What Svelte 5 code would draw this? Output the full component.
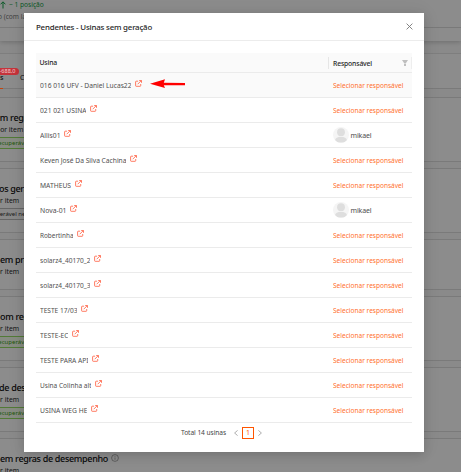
<script>
  let page = 1

  const usinas = [
    { nome: "016 016 UFV - Daniel Lucas22", largura: 91.5, destaque: true },
    { nome: "021 021 USINA", largura: 46.5 },
    { nome: "Allis01", largura: 20.5, responsavel: "mikael" },
    { nome: "Keven José Da Silva Cachina", largura: 86.5 },
    { nome: "MATHEUS", largura: 31 },
    { nome: "Nova-01", largura: 26.5, responsavel: "mikael" },
    { nome: "Robertinha", largura: 33.5 },
    { nome: "solarz4_40170_2", largura: 50.5 },
    { nome: "solarz4_40170_3", largura: 50.5 },
    { nome: "TESTE 17/03", largura: 37.5 },
    { nome: "TESTE-EC", largura: 28.5 },
    { nome: "TESTE PARA API", largura: 48.5 },
    { nome: "Usina Colinha alt", largura: 51.5 },
    { nome: "USINA WEG HE", largura: 47.5 },
  ]

  const regras = [
    { titulo: "em regras", item: "por item", tag: "recuperáveis", verde: true, recuo: -4, inicio: -5 },
    { titulo: "os geração", item: "or item", tag: "perável nesta", recuo: -4, inicio: -1 },
    { titulo: "em produção", item: "or item", baixo: true, recuo: -4, inicio: 0 },
    { titulo: "om regras", item: "or item", tag: "recuperáveis", verde: true, recuo: -4, inicio: 0 },
    { titulo: "de desempenho", item: "or item", tag: "recuperáveis", verde: true, recuo: -4, inicio: -1 },
    { titulo: "em regras de desempenho", item: "or item", info: true, recuo: -4, inicio: 0 },
  ]
</script>

<div class="page">
  <div class="summary">
    <div class="rank"><svg width="6" height="8" viewBox="0 0 6 8"><path d="M3 7.5V1M.6 3.3 3 .8l2.4 2.5" /></svg> ~ 1 posição</div>
    <div class="note">o (com lançamentos)</div>
    <div class="strip"></div>
  </div>

  <div class="tabs">
    <div class="tab active">as<span class="badge">-688,0</span></div>
    <div class="tab">Concluídas</div>
  </div>

  {#each regras as regra}
    <div class="card" class:low={regra.baixo}>
      <div class="card-title" style="margin-left: {regra.inicio}px">
        {regra.titulo}
        {#if regra.info}
          <svg width="8" height="8" viewBox="0 0 8 8"><circle cx="4" cy="4" r="3.4" /><path d="M4 3.5v2.3M4 2v.7" /></svg>
        {/if}
      </div>
      <div class="card-item" style="margin-left: {regra.recuo}px">{regra.item}</div>
      {#if regra.tag}
        <div class="tag" class:green={regra.verde}>{regra.tag}</div>
      {/if}
    </div>
  {/each}

  <div class="mask"></div>

  <div class="modal">
    <div class="modal-header">
      <span class="modal-title">Pendentes - Usinas sem geração</span>
      <svg class="close" width="7" height="7" viewBox="0 0 7 7"><path d="M.6.6l5.8 5.8M6.4.6.6 6.4" /></svg>
    </div>

    <div class="table">
      <div class="row head">
        <div class="usina">Usina</div>
        <div class="resp">
          <span>Responsável</span>
          <svg width="6" height="6" viewBox="0 0 6 6"><path d="M0 0h6L4 3H2zM2 3.5h2V6H2z" /></svg>
        </div>
      </div>

      {#each usinas as usina}
        <div class="row" class:hover={usina.destaque}>
          <div class="usina">
            <svg class="name" width={usina.largura} height="12">
              <text x="0" y="9" textLength={usina.largura} lengthAdjust="spacingAndGlyphs">{usina.nome}</text>
            </svg>
            <svg class="link" width="7" height="7" viewBox="0 0 7 7">
              <path d="M3.1 1.2H1.2a.6.6 0 0 0-.6.6v3.9c0 .4.2.6.6.6h3.9c.4 0 .6-.2.6-.6V4M2.7 4.2 6.2.7M4.2.5h2.3v2.3" />
            </svg>
            {#if usina.destaque}
              <svg class="arrow" width="36" height="10" viewBox="0 0 36 10"><path d="M0 4.8 15 .2l-1.2 3.6L35 4v2.2H13.8L15 9z" /></svg>
            {/if}
          </div>
          <div class="resp">
            {#if usina.responsavel}
              <span class="avatar">
                <svg width="16" height="16" viewBox="0 0 16 16"><circle cx="8" cy="5.2" r="3.9" /><ellipse cx="8" cy="12.7" rx="5.8" ry="2.9" /></svg>
              </span>
              <span class="person">{usina.responsavel}</span>
            {:else}
              <svg class="select" width="71" height="12">
                <text x="0" y="9" textLength="70.5" lengthAdjust="spacingAndGlyphs">Selecionar responsável</text>
              </svg>
            {/if}
          </div>
        </div>
      {/each}
    </div>

    <div class="pagination">
      <span class="total">Total 14 usinas</span>
      <svg width="4" height="6" viewBox="0 0 4 6"><path d="M3.6.4.6 3l3 2.6" /></svg>
      <span class="current">{page}</span>
      <svg width="4" height="6" viewBox="0 0 4 6"><path d="M.4.4l3 2.6-3 2.6" /></svg>
    </div>
  </div>
</div>

<style>
  .page {
    position: relative;
    width: 461px;
    height: 472px;
    overflow: hidden;
    background: #fcfcfc;
    font-family: "Noto Sans", sans-serif;
    font-size: 7px;
    color: #262626;
    white-space: nowrap;
  }

  svg {
    display: block;
    flex: none;
    fill: none;
    stroke: currentColor;
  }

  svg text {
    stroke: none;
    fill: currentColor;
  }

  .summary {
    box-sizing: border-box;
    height: 41px;
    background: #fff;
    box-shadow: 0 1px 5px rgba(0, 0, 0, 0.22);
  }

  .rank {
    display: flex;
    gap: 3px;
    align-items: center;
    height: 9px;
    font-size: 6.6px;
    color: #16a34a;
  }

  .note {
    height: 18px;
    line-height: 16px;
    margin-left: -2px;
    font-size: 6.6px;
    color: #777;
  }

  .strip {
    border-top: 1px solid #dcdcdc;
  }

  .tabs {
    display: flex;
    gap: 16px;
    box-sizing: border-box;
    height: 36px;
    margin-top: 12px;
    padding-top: 19px;
    background: #fff;
    border-top: 1px solid #e6e6e6;
    border-bottom: 1px solid #dedede;
  }

  .tab {
    position: relative;
    height: 15px;
    line-height: 10px;
    margin-left: 1px;
  }

  .tab.active {
    z-index: 1;
    width: 3px;
    margin-left: 0;
    text-indent: -4px;
    color: #1a1a1a;
    font-weight: 600;
    border-bottom: 1px solid #c4440c;
  }

  .badge {
    position: absolute;
    top: -5px;
    left: -4px;
    width: 23px;
    height: 7px;
    border-radius: 4px;
    background: #c5333b;
    color: #f0d0d2;
    font-size: 5.6px;
    font-weight: 400;
    line-height: 7px;
    text-align: center;
    text-indent: 0;
  }

  .card {
    box-sizing: border-box;
    height: 65px;
    margin-top: 6px;
    padding-top: 12px;
    background: #fff;
    border-top: 1px solid #dedede;
    border-bottom: 1px solid #dedede;
  }

  .tabs + .card {
    margin-top: 8px;
  }

  .card.low {
    height: 51px;
  }

  .card-title {
    display: flex;
    gap: 3px;
    align-items: center;
    height: 14px;
    margin-bottom: 1px;
    font-size: 9px;
    letter-spacing: -0.32px;
    font-weight: 500;
    color: #111;
  }

  .card-title svg {
    color: #888;
    stroke-width: 0.7;
  }

  .card-item {
    height: 12px;
    line-height: 10px;
    font-size: 6.8px;
  }

  .tag {
    box-sizing: border-box;
    width: 45px;
    height: 12px;
    line-height: 10px;
    text-indent: -4px;
    font-size: 6px;
    color: #333;
    background: #fafafa;
    border: 1px solid #bbb;
    border-left: 0;
  }

  .tag.green {
    color: #389e0d;
    background: #f6ffed;
    border-color: #95de64;
  }

  .mask {
    position: absolute;
    inset: 0;
    background: rgba(0, 0, 0, 0.45);
  }

  .modal {
    position: absolute;
    z-index: 2;
    top: 13px;
    left: 24px;
    width: 400px;
    height: 439px;
    background: #fff;
    box-shadow: 0 3px 9px rgba(0, 0, 0, 0.14), 0 0 18px rgba(0, 0, 0, 0.07);
  }

  .modal-header {
    display: flex;
    align-items: center;
    justify-content: space-between;
    box-sizing: border-box;
    height: 28px;
    padding: 0 11px 0 12px;
    border-bottom: 1px solid #ececec;
  }

  .modal-title {
    font-size: 7.9px;
    letter-spacing: -0.2px;
    font-weight: 500;
  }

  .close {
    color: #777;
    stroke-width: 0.9;
  }

  .table {
    margin: 12px 12px 0;
    color: #505050;
  }

  .row {
    display: flex;
    box-sizing: border-box;
    height: 25px;
    border-bottom: 1px solid #ebebeb;
  }

  .row.head {
    height: 20px;
    background: #fafafa;
    color: #262626;
    font-weight: 500;
    font-size: 6.8px;
    letter-spacing: -0.15px;
  }

  .row.hover {
    background: #fafafa;
  }

  .usina {
    display: flex;
    align-items: center;
    width: 292px;
    padding-left: 3.5px;
    box-sizing: border-box;
  }

  .resp {
    display: flex;
    align-items: center;
    width: 84px;
    padding-left: 5px;
    box-sizing: border-box;
  }

  .head .resp {
    justify-content: space-between;
    height: 12px;
    margin-top: 4px;
    padding-left: 4px;
    padding-right: 3px;
    border-left: 1px solid #e6e6e6;
    border-right: 1px solid #eee;
  }

  .head svg {
    fill: #bfbfbf;
    stroke: none;
  }

  .link {
    margin: -3px 0 0 4px;
    color: #ff6347;
    stroke-width: 0.85;
  }

  .arrow {
    margin: -3px 0 0 8px;
    fill: #f00;
    stroke: none;
  }

  .select {
    color: #ff6f2e;
  }

  .avatar {
    width: 16px;
    height: 16px;
    border-radius: 50%;
    overflow: hidden;
    background: #f5f5f5;
  }

  .avatar svg {
    fill: #dedede;
    stroke: none;
  }

  .person {
    margin-left: 1.5px;
    letter-spacing: -0.15px;
  }

  .pagination {
    display: flex;
    align-items: center;
    height: 19px;
    padding-left: 157px;
    color: #444;
  }

  .pagination svg {
    color: #999;
    stroke-width: 0.8;
  }

  .total {
    width: 53px;
    font-size: 6.6px;
    letter-spacing: -0.05px;
  }

  .current {
    box-sizing: border-box;
    width: 12px;
    height: 12px;
    margin: 0 4px;
    border: 1px solid #ff5500;
    color: #ff5500;
    line-height: 10px;
    text-align: center;
  }
</style>
